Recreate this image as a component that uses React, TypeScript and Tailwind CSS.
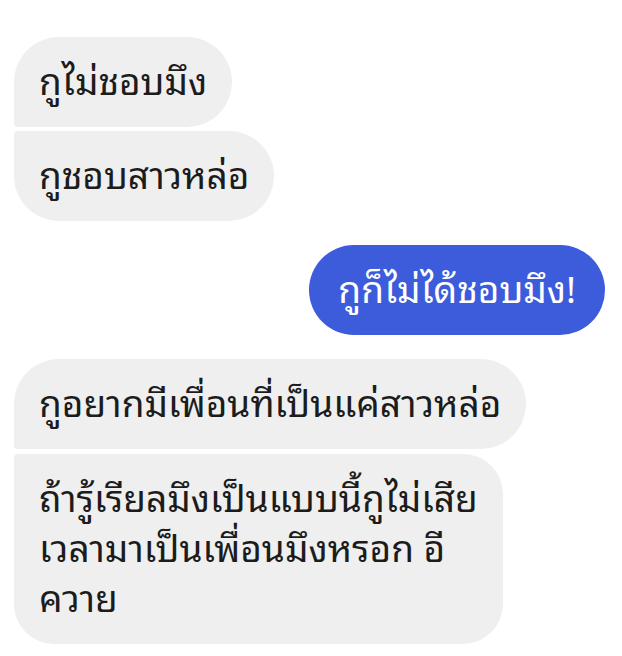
const font = {
  fontFamily: '"Noto Sans Thai Looped", "Noto Sans", sans-serif',
};

function Left({ children, first }: { children: React.ReactNode; first: boolean }) {
  return (
    <div
      className={
        'w-fit bg-[#efefef] text-[#1c1c1c] text-[37px] leading-[50px] px-[25px] pt-[17px] pb-[23px] rounded-r-[45px] ' +
        (first ? 'rounded-tl-[45px] rounded-bl-[4px]' : 'rounded-tl-[4px] rounded-bl-[45px]')
      }
    >
      {children}
    </div>
  );
}

export default function App() {
  return (
    <div className="w-[622px] h-[656px] bg-white pt-[37px] pl-[14px] pr-[17px] overflow-hidden" style={font}>
      <div className="flex flex-col gap-[4px]">
        <Left first>กูไม่ชอบมึง</Left>
        <Left first={false}>กูชอบสาวหล่อ</Left>
      </div>

      <div className="flex justify-end mt-[24px]">
        <div className="bg-[#3d5cdb] text-white text-[37px] leading-[50px] px-[29px] pt-[17px] pb-[23px] rounded-full">
          กูก็ไม่ได้ชอบมึง!
        </div>
      </div>

      <div className="flex flex-col gap-[5px] mt-[24px]">
        <Left first>กูอยากมีเพื่อนที่เป็นแค่สาวหล่อ</Left>
        <div className="w-fit bg-[#efefef] text-[#1c1c1c] text-[37px] leading-[50px] px-[25px] pt-[17px] pb-[23px] rounded-tl-[4px] rounded-bl-[40px] rounded-r-[40px]">
          ถ้ารู้เรียลมึงเป็นแบบนี้กูไม่เสีย
          <br />
          เวลามาเป็นเพื่อนมึงหรอก อี
          <br />
          ควาย
        </div>
      </div>
    </div>
  );
}
